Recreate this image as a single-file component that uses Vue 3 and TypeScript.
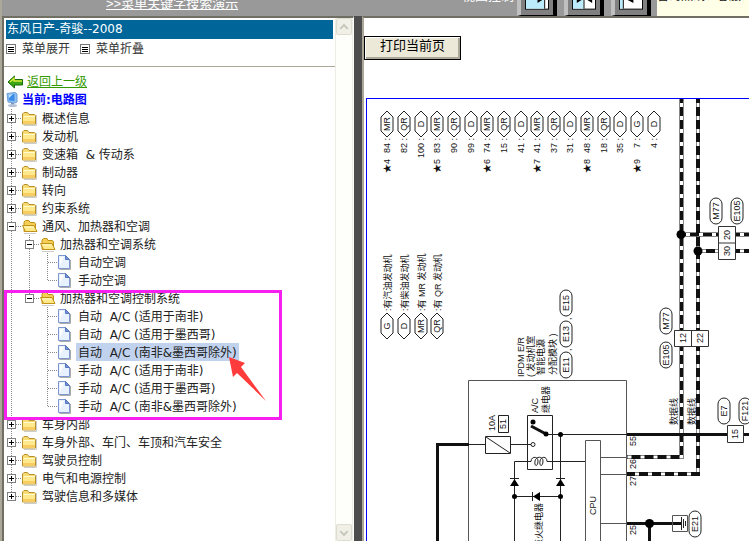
<script setup lang="ts">
import { ref } from 'vue'

type Cell = 'line' | 'blank' | 'tee' | 'elbow' | 'plus' | 'minus' | 'plusEnd'
type Icon = 'folder' | 'open' | 'file'
interface Row { cells: Cell[]; icon: Icon; text: string }

const top = (text: string): Row => ({ cells: ['plus'], icon: 'folder', text })
const rows: Row[] = [
  top('概述信息'),
  top('发动机'),
  top('变速箱  & 传动系'),
  top('制动器'),
  top('转向'),
  top('约束系统'),
  { cells: ['minus'], icon: 'open', text: '通风、加热器和空调' },
  { cells: ['line', 'minus'], icon: 'open', text: '加热器和空调系统' },
  { cells: ['line', 'line', 'tee'], icon: 'file', text: '自动空调' },
  { cells: ['line', 'line', 'elbow'], icon: 'file', text: '手动空调' },
  { cells: ['line', 'minus'], icon: 'open', text: '加热器和空调控制系统' },
  { cells: ['line', 'blank', 'tee'], icon: 'file', text: '自动  A/C (适用于南非)' },
  { cells: ['line', 'blank', 'tee'], icon: 'file', text: '自动  A/C (适用于墨西哥)' },
  { cells: ['line', 'blank', 'tee'], icon: 'file', text: '自动  A/C (南非&墨西哥除外)' },
  { cells: ['line', 'blank', 'tee'], icon: 'file', text: '手动  A/C (适用于南非)' },
  { cells: ['line', 'blank', 'tee'], icon: 'file', text: '手动  A/C (适用于墨西哥)' },
  { cells: ['line', 'blank', 'elbow'], icon: 'file', text: '手动  A/C (南非&墨西哥除外)' },
  top('车身内部'),
  top('车身外部、车门、车顶和汽车安全'),
  top('驾驶员控制'),
  top('电气和电源控制'),
  { cells: ['plusEnd'], icon: 'folder', text: '驾驶信息和多媒体' },
]
const selected = ref(13)
const isToggle = (c: Cell): boolean => c === 'plus' || c === 'minus' || c === 'plusEnd'

// Connector code, page number and optional group number, left to right
const codes: [string, string, string][] = [
  ['MR', '84', '4'], ['QR', '82', ''], ['D', '100', ''],
  ['MR', '83', '5'], ['QR', '90', ''], ['D', '99', ''],
  ['MR', '74', '6'], ['QR', '15', ''], ['D', '41', ''],
  ['MR', '41', '7'], ['QR', '37', ''], ['D', '31', ''],
  ['MR', '48', '8'], ['QR', '18', ''], ['D', '35', ''],
  ['G', '7', '9'], ['D', '4', ''],
]
const codeX = (i: number): number => Math.round(387.3 + i * 16.65)
const legend: [string, string][] = [
  ['G', ':有汽油发动机'], ['D', ':有柴油发动机'], ['MR', ':有 MR 发动机'], ['QR', ':有 QR 发动机'],
]
const hex = (x: number, y: number): string =>
  `${x},${y - 13} ${x + 6},${y - 7} ${x + 6},${y + 7} ${x},${y + 13} ${x - 6},${y + 7} ${x - 6},${y - 7}`
const up = (x: number, y: number): string => `translate(${x} ${y}) rotate(-90)`

const pills: [string, number, number][] = [
  ['E15', 566, 303], ['E13', 566, 334], ['E11', 566, 365],
  ['M77', 666, 321], ['E105', 666, 355],
  ['M77', 716, 211], ['E105', 737, 211],
  ['E7', 724, 411], ['F121', 745, 411], ['E21', 695, 524],
]
const terminals: [string, number, number][] = [
  ['20', 727, 235], ['30', 727, 251], ['12', 683, 338], ['22', 700, 338], ['15', 735, 434],
]
const pins: [string, number][] = [['55', 446], ['26', 469], ['27', 486], ['25', 535]]
const notes: [string, number, number][] = [
  ['IPDM E/R', 524, 377], ['( 发动机室', 534, 377], ['智能电源', 544, 375], ['分配模块 )', 556, 375],
  ['A/C', 538, 413], ['继电器', 549, 413], ['数据线', 677, 425], ['数据线', 695, 425],
  ['CPU', 596, 515], ['10A', 495, 431], ['51', 506, 429],
]
const dashed: string[] = [
  'M681.5 99V330M681.5 347V457H627', 'M698 99V330M698 347V474H627', 'M682 234.5H718M736 234.5H1200', 'M698 251H718M736 251H1200',
]
const layouts = [['all', '显示菜单'], ['split', '左右分栏'], ['page', '显示内容']]
</script>

<template>
  <div class="page">
    <header class="bar">
      <a class="demo" href="#demo">&gt;&gt;菜单关键字搜索演示</a>
      <span class="control">视图控制</span>
      <div class="layouts">
        <button v-for="l in layouts" :key="l[0]" type="button" class="layout" :aria-label="l[1]">
          <svg width="25" height="20" viewBox="0 0 25 20" aria-hidden="true">
            <rect x=".5" y=".5" width="24" height="19" fill="#fff" stroke="#000" />
            <template v-if="l[0] === 'all'">
              <path d="M1 1H20V19H1Z" fill="#bcecfc" /><path d="M20.500 1V19" stroke="#000" /><path d="M13 13V7L18 10Z" />
            </template>
            <template v-else-if="l[0] === 'split'">
              <path d="M1 1H12V19H1Z" fill="#bcecfc" /><path d="M12.500 1V19" stroke="#000" /><path d="M5 13V7L10 10ZM21 13V7L16 10Z" />
            </template>
            <template v-else>
              <path d="M1 1H4V19H1Z" fill="#bcecfc" /><path d="M4.500 1V19" stroke="#000" /><path d="M15 13V7L9 10Z" />
            </template>
          </svg>
        </button>
      </div>
      <span class="service">咨询热线、客服</span>
    </header>

    <div class="frames">
      <aside class="menu">
        <div class="menu-body">
          <h1 class="title">东风日产-奇骏--2008</h1>
          <div class="tools">
            <button v-for="t in ['菜单展开', '菜单折叠']" :key="t" type="button" class="tool">
              <svg width="10" height="10" viewBox="0 0 10 10" aria-hidden="true">
                <rect x=".5" y=".5" width="9" height="9" fill="#fff" stroke="#777" />
                <path d="M2 3.500H8M2 5.500H8M2 7.500H8" stroke="#000" />
              </svg>
              {{ t }}
            </button>
          </div>
          <div class="content">
            <a class="back" href="#back">
              <svg width="17" height="14" viewBox="0 0 17 14" aria-hidden="true">
                <path d="M1 7L7.500 1V4.500H15.500V10H7.500V13Z" fill="#3aa515" stroke="#176b08" />
                <path d="M3 7L7 3.500V6H15" fill="none" stroke="#d8ec3c" stroke-width="1.500" />
              </svg>
              <span>返回上一级</span>
            </a>
            <div class="current">
              <svg width="14" height="16" viewBox="0 0 14 16" aria-hidden="true">
                <path d="M1 1.500L9 .5L11 2V10L9 11L2 10Z" fill="#8fc0f0" stroke="#6c9ed8" />
                <path d="M2.500 2.500L8.500 2V9L3 8.500Z" fill="#3a8ae8" />
                <path d="M2.500 2.500L7 2L3 6Z" fill="#bfe2fc" />
                <path d="M5 11H8V13H5Z" fill="#8299bb" />
                <ellipse cx="6.500" cy="13.500" rx="4.500" ry="1.500" fill="#b3c0d6" />
              </svg>
              <strong>当前:电路图</strong>
            </div>
            <ul class="tree">
              <li v-for="(r, i) in rows" :key="i" class="row">
                <template v-for="(c, k) in r.cells" :key="k">
                  <component :is="isToggle(c) ? 'button' : 'span'" class="cell" :type="isToggle(c) ? 'button' : undefined" :aria-label="isToggle(c) ? r.text : undefined">
                    <svg width="18" height="18" viewBox="0 0 18 18" aria-hidden="true">
                      <g stroke="#888" stroke-dasharray="1 1">
                        <path v-if="c === 'line' || c === 'tee' || c === 'plus' || (c === 'minus' && k === 0)" d="M7.500 0V18" />
                        <path v-if="c === 'elbow' || c === 'plusEnd' || (c === 'minus' && k === 1)" d="M7.500 0V9" />
                        <path v-if="c === 'minus' && k === 1 && i === 7" d="M7.500 8V18" />
                        <path v-if="c !== 'line' && c !== 'blank'" d="M8 9.500H18" />
                      </g>
                      <template v-if="isToggle(c)">
                        <rect x="3.500" y="5.500" width="8" height="8" fill="#fff" stroke="#808080" />
                        <path d="M5 9.500H10" stroke="#000" />
                        <path v-if="c !== 'minus'" d="M7.500 7V12" stroke="#000" />
                      </template>
                    </svg>
                  </component>
                </template>
                <svg class="icon" width="18" height="18" viewBox="0 0 18 18" aria-hidden="true">
                  <template v-if="r.icon === 'folder'">
                    <path d="M2 16.500H14.500V6" fill="none" stroke="#ccc" />
                    <path d="M.5 15V5L2 3.500H5.500L7 5.500H12.500L13.500 6.500V15Z" fill="#f8dc72" stroke="#b8902c" />
                    <path d="M1 8H13V14.500H1Z" fill="#ffe98c" /><path d="M1 12H13V14.500H1Z" fill="#f9cc62" />
                    <path d="M1.500 7.500H13" stroke="#fffbd0" />
                  </template>
                  <template v-else-if="r.icon === 'open'">
                    <path d="M2 16.500H14" stroke="#ccc" />
                    <path d="M2 14.500V5L3.500 3.500H7L8 5.500H12.500L13.500 7V14Z" fill="#f5cf55" stroke="#c29218" />
                    <path d="M.5 8.500H12L15 14.500H3.500Z" fill="#ffe889" stroke="#c29218" />
                    <path d="M2 9.500H11.500L12 10.500H2.500Z" fill="#fffac8" />
                  </template>
                  <template v-else>
                    <path d="M1.500 16.500H12.500V7" fill="none" stroke="#aaa" />
                    <path d="M.5 2.500H7.500L11.500 6.500V15.500H.5Z" fill="#e8f1ff" stroke="#7d96d0" />
                    <path d="M2 4H6L2 12Z" fill="#fff" /><path d="M7.500 2.500V6.500H11.500Z" fill="#7694dc" stroke="#5775ba" />
                  </template>
                </svg>
                <a class="label" :class="{ selected: i === selected }" href="#node" @click.prevent="selected = i">{{ r.text }}</a>
              </li>
              <li class="mark" aria-hidden="true">
                <svg width="40" height="48" viewBox="0 0 40 48">
                  <path d="M1 1L17 7L13 11L38 45L9 17L5 21Z" fill="#ff3b3b" />
                </svg>
              </li>
            </ul>
          </div>
        </div>
        <div class="scroll" aria-hidden="true">
          <span class="arrow"><svg width="15" height="16" viewBox="0 0 15 16"><path d="M3.500 10L7.500 6L11.500 10" /></svg></span>
          <span class="arrow"><svg width="15" height="16" viewBox="0 0 15 16"><path d="M3.500 6L7.500 10L11.500 6" /></svg></span>
        </div>
      </aside>
      <div class="splitter"></div>
      <main class="view">
        <button type="button" class="print">打印当前页</button>
        <div class="sheet">
          <svg class="diagram" role="img" aria-label="电路图">
            <g transform="translate(-367 -99)">
              <g v-for="(c, i) in codes" :key="'c' + i">
                <polygon :points="hex(codeX(i), 124)" class="thin" />
                <text :transform="up(codeX(i) + 3, 124)" text-anchor="middle">{{ c[0] }}</text>
                <text :transform="up(codeX(i) + 3, 138)" text-anchor="end">{{ c[1] }} :</text>
                <text v-if="c[2]" :transform="up(codeX(i) + 3, 159)" text-anchor="end"><tspan class="star">★</tspan>{{ c[2] }}</text>
              </g>
              <g v-for="(l, i) in legend" :key="'l' + i">
                <polygon :points="hex(codeX(i), 326)" class="thin" />
                <text :transform="up(codeX(i) + 3, 326)" text-anchor="middle">{{ l[0] }}</text>
                <text :transform="up(codeX(i) + 4, 311)">{{ l[1] }}</text>
              </g>

              <path class="grey" d="M468.500 1200V380.500H626.500V1200" />
              <path class="heavy" d="M437.500 1200V444.500H469" />
              <path class="thin" d="M469 444.500H485M511 444.500H531M485.500 436.500H510.500V453.500H485.500ZM486 437L510 453M527.500 415.500H552.500V469.500H527.500ZM498.500 415.500H508.500V432.500H498.500Z" />
              <circle class="thin" cx="533" cy="444.500" r="2" />
              <path class="thin" d="M546 434.500H627M514.500 1200V461.500H531C531 456 538 456 538 461C538 467 534 467 535 461C536 456 543 456 543 461C543 467 539 467 540 461C541 456 547 456 547 461.500H585M560.500 434V1200M514 496.500H560" />
              <path d="M531 426L546 434" stroke="#111" stroke-width="3" />
              <circle cx="533" cy="422" r="2.500" /><circle cx="546" cy="434" r="2.500" />
              <circle cx="560.500" cy="434.500" r="2.500" /><circle cx="514.500" cy="496.500" r="2.500" /><circle cx="560.500" cy="496.500" r="2.500" />
              <path d="M514.500 479L519 486H510ZM560.500 479L565 486H556ZM533 496.500L540 492V501Z" />
              <path class="thin" d="M510 478.500H519M556 478.500H565M532.500 492V501" />
              <path class="grey" d="M585.500 1200V440.500H600.500V1200M600 457.500H627M600 474.500H627M600 523.500H627" />
              <path class="heavy" d="M627 434.500H727M744 434.500H1200M627 523.500H681M649.500 523V1200" />
              <g v-for="d in dashed" :key="d" fill="none">
                <path :d="d" stroke="#111" stroke-width="4" />
                <path :d="d" stroke="#fff" stroke-width="3" stroke-dasharray="4 9" stroke-dashoffset="-4" />
              </g>
              <circle cx="681" cy="234.500" r="4.500" /><circle cx="698" cy="251" r="4.500" /><circle cx="649.500" cy="523.500" r="4.500" />
              <path class="box" d="M718.500 226.500H735.500V259.500H718.500ZM718.500 243H735.500M674.500 330.500H708.500V346.500H674.500ZM691.500 330.500V346.500M727.500 425.500H743.500V442.500H727.500Z" />
              <path class="grey" d="M672.500 515.500H687.500V531.500H672.500Z" />
              <path class="thin" d="M681.500 517V530M683.500 519V528M685.500 521V526" />

              <g v-for="(p, i) in pills" :key="'p' + i">
                <rect class="thin" :x="p[1] - 6" :y="p[2] - 13" width="12" height="26" rx="6" />
                <text :transform="up(p[1] + 3, p[2])" text-anchor="middle">{{ p[0] }}</text>
              </g>
              <text :transform="up(571, 351)">,</text>
              <text :transform="up(571, 320)">,</text>
              <text v-for="(t, i) in terminals" :key="'t' + i" :transform="up(t[1] + 3, t[2])" text-anchor="middle">{{ t[0] }}</text>
              <text v-for="p in pins" :key="p[0]" :transform="up(636, p[1])">{{ p[0] }}</text>
              <text v-for="(n, i) in notes" :key="'n' + i" :transform="up(n[1], n[2])">{{ n[0] }}</text>
              <text :transform="up(542, 503)" text-anchor="end">点火继电器</text>
            </g>
          </svg>
        </div>
      </main>
    </div>
  </div>
</template>

<style>
body { overflow: hidden; }
</style>

<style scoped>
.page {
  height: 100vh;
  display: flex;
  flex-direction: column;
  box-sizing: border-box;
  border-left: 2px solid #aca899;
  background: #fff;
  color: #333;
  font: 12px/18px "DejaVu Sans", "Noto Sans CJK SC", sans-serif;
}
button { font: inherit; color: inherit; border: 0; padding: 0; background: none; }
.bar {
  flex: none;
  height: 16px;
  display: flex;
  align-items: flex-end;
  overflow: hidden;
  background: #999;
  color: #fff;
  font: 13px/20px "Liberation Sans", "Noto Sans CJK SC", sans-serif;
  white-space: nowrap;
}
.demo { color: #fff; margin-left: 104px; flex: 0 0 356px; padding-bottom: 2px; }
.control { flex: 0 0 53px; padding-bottom: 10px; }
.layouts { display: flex; gap: 7px; flex: 0 0 142px; padding-left: 2px; box-sizing: border-box; }
.layout {
  display: flex;
  width: 40px;
  height: 30px;
  box-sizing: border-box;
  padding: 4px 4px 6px;
  background: #808080;
  border-left: 4px solid #c0c0c0;
  border-right: 4px solid #000;
  border-bottom: 1px solid #000;
}
.service {
  flex: 1;
  height: 32px;
  background: #ffffe8;
  color: #111;
  line-height: 24px;
  font-size: 12px;
}
.frames { flex: 1; min-height: 0; display: flex; }
.menu {
  flex: 0 0 352px;
  box-sizing: border-box;
  display: flex;
  border-top: 2px solid #716f64;
  border-left: 2px solid #716f64;
  border-right: 1px solid #fff;
}
.menu-body { flex: 1; min-width: 0; overflow: hidden; }
.title {
  margin: 2px 2px 0;
  padding: 0 1px;
  background: #069;
  color: #fff;
  font: inherit;
  line-height: 19px;
}
.tools { display: flex; gap: 10px; padding: 1px 2px 0; height: 26px; border-bottom: 1px solid #aca899; }
.tool { display: flex; align-items: center; gap: 6px; height: 18px; white-space: nowrap; }
.content { padding-top: 6px; }
.back, .current { display: flex; align-items: center; height: 18px; }
.back { color: #390; gap: 3px; padding-left: 3px; text-decoration: none; }
.back span { text-decoration: underline; }
.current { color: #00f; gap: 2px; padding-left: 2px; line-height: 20px; }
.tree { position: relative; list-style: none; margin: 0; padding: 0; }
.row { display: flex; height: 18px; }
.cell, .icon { flex: none; width: 18px; height: 18px; }
.cell svg { display: block; }
.label { padding: 0 2px; color: #222; line-height: 20px; text-decoration: none; white-space: pre; }
.selected { background: #c1d2ee; }
.mark {
  position: absolute;
  top: 181px;
  left: 0;
  width: 278px;
  height: 130px;
  box-sizing: border-box;
  border: 3px solid #f820f0;
  pointer-events: none;
}
.mark svg { position: absolute; left: 221px; top: 63px; }
.scroll {
  flex: none;
  width: 16px;
  display: flex;
  flex-direction: column;
  justify-content: space-between;
  border-left: 1px solid #eeede5;
  border-right: 1px solid #eeede5;
  background: #fefefb;
}
.arrow { display: flex; border: 1px solid #dddccf; border-radius: 2px; background: #f1f0e8; height: 15px; }
.arrow path { fill: none; stroke: #c6c5ba; stroke-width: 2; }
.splitter { flex: 0 0 8px; background: #4d4d4d; }
.view {
  flex: 1;
  min-width: 0;
  display: flex;
  flex-direction: column;
  align-items: flex-start;
  border-top: 2px solid #716f64;
  border-left: 2px solid #aca899;
}
.print {
  margin-top: 18px;
  height: 24px;
  padding: 0 15px 4px;
  background: #ece9d8;
  border: 1px solid #000;
  box-shadow: inset 1px 1px #fff, inset -2px -2px #aca899;
  color: #000;
  font-size: 13px;
  white-space: nowrap;
}
.sheet { flex: 1; min-height: 0; align-self: stretch; margin: 38px 0 0 2px; border: solid #00f; border-width: 1px 0 0 1px; }
.diagram { display: block; width: 100%; height: 100%; overflow: hidden; }
.diagram text { font: 9px "Liberation Sans", "Noto Sans CJK SC", sans-serif; fill: #111; white-space: pre; }
.diagram .star { font-size: 9px; }
.thin { fill: none; stroke: #222; }
.grey { fill: none; stroke: #555; }
.heavy { fill: none; stroke: #111; stroke-width: 3; }
.box { fill: #fff; stroke: #333; }
</style>
